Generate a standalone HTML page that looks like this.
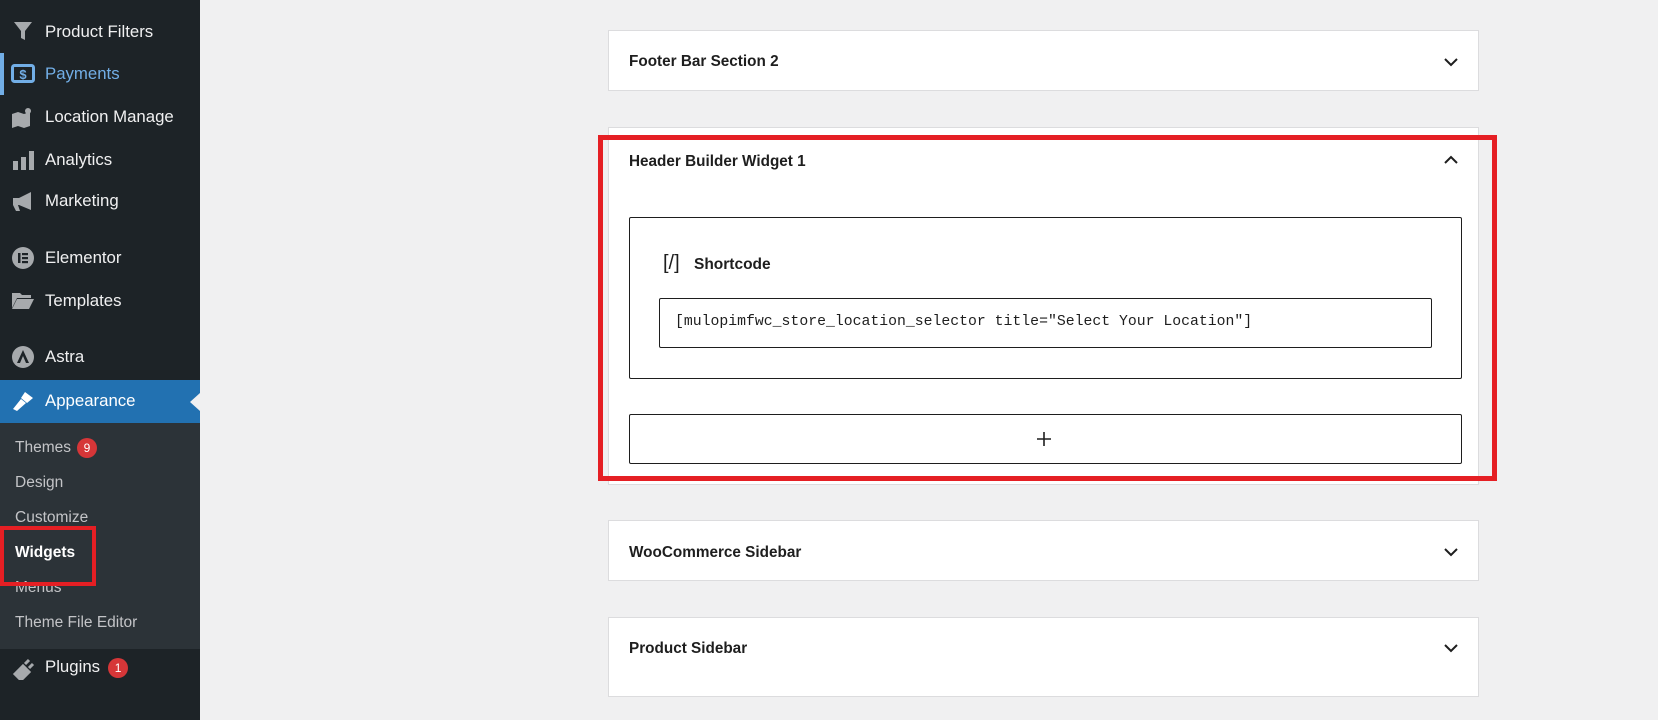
<!DOCTYPE html>
<html style="background:#f0f0f1"><head><meta charset="utf-8"><style>
*{box-sizing:border-box;margin:0;padding:0}
body{width:1658px;height:674px;overflow:hidden;background:#f0f0f1;font-family:"Liberation Sans",sans-serif;position:relative}
.sb{position:absolute;left:0;top:0;width:200px;height:720px;background:#1d2327}
.it{position:absolute;left:45px;color:#f0f0f1;font-size:16.8px;line-height:20px}
.ic{position:absolute;left:11px;width:24px;height:22px}
.sub{position:absolute;left:0;top:423px;width:200px;height:226px;background:#2c3338}
.si{position:absolute;left:15px;color:#c3c4c7;font-size:15.5px;line-height:18px}
.badge{display:inline-block;width:20px;height:20px;border-radius:10px;background:#d63638;color:#fff;font-size:12px;text-align:center;line-height:20px;margin-left:6px;vertical-align:middle}
.panel{position:absolute;left:608px;width:871px;background:#fff;border:1px solid #dcdcde}
.pt{position:absolute;left:20px;font-weight:bold;font-size:15.3px;color:#1e1e1e}
.chev{position:absolute;left:834px;width:16px;height:10px}
</style></head><body>
<div class="sb">
<div style="position:absolute;left:0;top:53px;width:4px;height:42px;background:#72aee6"></div>
<svg class="ic" style="top:20px" viewBox="0 0 24 22"><path d="M3 2h18l-7 9v9l-4-2v-7z" fill="#a7aaad"/></svg>
<div class="it" style="top:22px">Product Filters</div>
<svg class="ic" style="top:63px" viewBox="0 0 24 22"><rect x="1.5" y="2.5" width="21" height="16" rx="2" fill="none" stroke="#72aee6" stroke-width="3"/><text x="12" y="16" font-size="13" font-weight="bold" fill="#72aee6" text-anchor="middle" font-family="Liberation Sans">$</text></svg>
<div class="it" style="top:64px;color:#72aee6">Payments</div>
<svg class="ic" style="top:106px" viewBox="0 0 24 22"><path d="M1 8l6-2 6 2 6-2v14l-6 2-6-2-6 2z" fill="#a7aaad"/><circle cx="17" cy="5" r="3" fill="#a7aaad"/></svg>
<div class="it" style="top:107px">Location Manage</div>
<svg class="ic" style="top:149px" viewBox="0 0 24 22"><rect x="2" y="12" width="5" height="9" fill="#a7aaad"/><rect x="10" y="8" width="5" height="13" fill="#a7aaad"/><rect x="18" y="2" width="5" height="19" fill="#a7aaad"/></svg>
<div class="it" style="top:150px">Analytics</div>
<svg class="ic" style="top:190px" viewBox="0 0 24 22"><path d="M2 8h6l12-6v18l-12-5h-1l2 6h-4l-3-6h-0z" fill="#a7aaad"/></svg>
<div class="it" style="top:191px">Marketing</div>
<svg class="ic" style="top:247px" viewBox="0 0 24 22"><circle cx="12" cy="11" r="11" fill="#a7aaad"/><rect x="7" y="6" width="2.5" height="10" fill="#1d2327"/><rect x="11" y="6" width="6" height="2.2" fill="#1d2327"/><rect x="11" y="10" width="6" height="2.2" fill="#1d2327"/><rect x="11" y="14" width="6" height="2.2" fill="#1d2327"/></svg>
<div class="it" style="top:248px">Elementor</div>
<svg class="ic" style="top:290px" viewBox="0 0 24 22"><path d="M1 3h8l2 2h9v3H6L1 18z M6 9h17l-5 10H1z" fill="#a7aaad"/></svg>
<div class="it" style="top:291px">Templates</div>
<svg class="ic" style="top:346px" viewBox="0 0 24 22"><circle cx="12" cy="11" r="11" fill="#a7aaad"/><path d="M12 4l6 13h-3l-3-7-3 7H6z" fill="#1d2327"/></svg>
<div class="it" style="top:347px">Astra</div>
<div style="position:absolute;left:0;top:380px;width:200px;height:43px;background:#2271b1"></div>
<div style="position:absolute;left:190px;top:393px;width:0;height:0;border-top:9px solid transparent;border-bottom:9px solid transparent;border-right:10px solid #f0f0f1"></div>
<svg class="ic" style="top:390px" viewBox="0 0 24 22"><path d="M14 2l8 6-6 5-6-5z M10 9l5 4-9 8-4-2z" fill="#fff"/></svg>
<div class="it" style="top:391px;color:#fff">Appearance</div>
<div class="sub">
<div class="si" style="top:15px">Themes<span class="badge">9</span></div>
<div class="si" style="top:51px">Design</div>
<div class="si" style="top:86px">Customize</div>
<div class="si" style="top:121px;color:#fff;font-weight:bold">Widgets</div>
<div class="si" style="top:156px">Menus</div>
<div class="si" style="top:191px">Theme File Editor</div>
</div>
<div style="position:absolute;left:0;top:526px;width:96px;height:60px;border:4px solid #e51f24"></div>
<svg class="ic" style="top:658px" viewBox="0 0 24 22"><path d="M4 16l8-8 6 6-8 8z M14 6l4-4 M18 10l4-4" stroke="#a7aaad" stroke-width="3" fill="#a7aaad"/></svg>
<div class="it" style="top:657px">Plugins<span class="badge" style="margin-left:8px">1</span></div>
</div>

<div class="panel" style="top:30px;height:61px"><div class="pt" style="top:22px">Footer Bar Section 2</div>
<svg class="chev" style="top:26px" viewBox="0 0 16 10"><path d="M2 2l6 6 6-6" stroke="#1e1e1e" stroke-width="2" fill="none"/></svg></div>

<div class="panel" style="top:127px;height:358px">
<div class="pt" style="top:25px">Header Builder Widget 1</div>
<svg class="chev" style="top:27px" viewBox="0 0 16 10"><path d="M2 8l6-6 6 6" stroke="#1e1e1e" stroke-width="2" fill="none"/></svg>
<div style="position:absolute;left:20px;top:89px;width:833px;height:162px;border:1px solid #1e1e1e;border-radius:2px">
<div style="position:absolute;left:33px;top:34px;font-size:20px;color:#1e1e1e;font-family:'Liberation Sans',sans-serif">[/]</div>
<div style="position:absolute;left:64px;top:38px;font-size:15.5px;font-weight:bold;color:#1e1e1e">Shortcode</div>
<div style="position:absolute;left:29px;top:80px;width:773px;height:50px;border:1px solid #1e1e1e;border-radius:2px;font-family:'Liberation Mono',monospace;font-size:14.8px;color:#1e1e1e;padding:15px 0 0 15px;white-space:nowrap">[mulopimfwc_store_location_selector title="Select Your Location"]</div>
</div>
<div style="position:absolute;left:20px;top:286px;width:833px;height:50px;border:1px solid #1e1e1e;border-radius:2px">
<svg style="position:absolute;left:406px;top:16px" width="16" height="16" viewBox="0 0 16 16"><path d="M8 1v14M1 8h14" stroke="#1e1e1e" stroke-width="1.6"/></svg></div>
</div>
<div style="position:absolute;left:598px;top:135px;width:899px;height:346px;border:5px solid #e51f24"></div>

<div class="panel" style="top:520px;height:61px"><div class="pt" style="top:23px">WooCommerce Sidebar</div>
<svg class="chev" style="top:26px" viewBox="0 0 16 10"><path d="M2 2l6 6 6-6" stroke="#1e1e1e" stroke-width="2" fill="none"/></svg></div>
<div class="panel" style="top:617px;height:80px"><div class="pt" style="top:22px">Product Sidebar</div>
<svg class="chev" style="top:25px" viewBox="0 0 16 10"><path d="M2 2l6 6 6-6" stroke="#1e1e1e" stroke-width="2" fill="none"/></svg></div>
</body></html>
